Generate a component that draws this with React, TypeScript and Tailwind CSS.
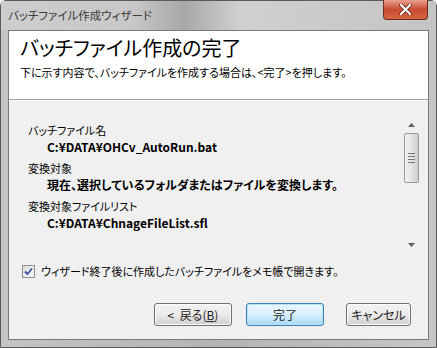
const jp = {
  fontFamily: '"Noto Sans CJK JP", "Liberation Sans", sans-serif',
  fontFeatureSettings: '"palt"',
};

const Scrollbar = () => (
  <div className="flex w-[17px] flex-col items-center bg-[#f0f0f0]">
    <div className="flex h-[17px] w-full items-center justify-center">
      <svg width="7" height="4" viewBox="0 0 7 4">
        <path d="M0 4 L3.5 0 L7 4 Z" fill="#606060" />
      </svg>
    </div>
    <div className="flex h-[50px] w-[15px] flex-col items-center justify-center gap-[2px] rounded-[2px] border border-[#9a9a9a] bg-gradient-to-r from-[#f2f2f2] via-[#e4e4e4] to-[#cfcfcf]">
      <div className="h-px w-[7px] bg-[#777]" />
      <div className="h-px w-[7px] bg-[#777]" />
      <div className="h-px w-[7px] bg-[#777]" />
      <div className="h-px w-[7px] bg-[#777]" />
    </div>
    <div className="flex-1" />
    <div className="flex h-[17px] w-full items-center justify-center">
      <svg width="7" height="4" viewBox="0 0 7 4">
        <path d="M0 0 L3.5 4 L7 0 Z" fill="#606060" />
      </svg>
    </div>
  </div>
);

const Btn = ({ label, primary }: { label: React.ReactNode; primary?: boolean }) => (
  <button
    className={`flex h-[23px] w-full items-center justify-center rounded-[3px] border text-[12px] text-[#222] ${
      primary
        ? "border-[#3c7fb1] bg-gradient-to-b from-[#eaf6fd] via-[#d9f0fc] to-[#a7d9f5] shadow-[inset_0_0_0_1px_#b8e4fb]"
        : "border-[#707070] bg-gradient-to-b from-[#f2f2f2] via-[#ebebeb] to-[#cfcfcf] shadow-[inset_0_0_0_1px_#fcfcfc]"
    }`}
  >
    {label}
  </button>
);

export default function App() {
  return (
    <div style={jp} className="h-[348px] w-[437px] overflow-hidden bg-white">
      <div className="flex h-full w-full flex-col rounded-t-[6px] border border-[#5a5a5a] bg-gradient-to-r from-[#c4c4c4] via-[#b4b4b4] to-[#c6c6c6]">
        {/* title bar */}
        <div className="relative flex h-[29px] shrink-0 items-center bg-[linear-gradient(90deg,#cdcdcd_0%,#c8c8c8_30%,#a8a8a8_42%,#d0d0d0_55%,#c4c4c4_100%)] pl-[7px]">
          <span className="text-[11.5px] text-[#3a3a3a]">バッチファイル作成ウィザード</span>
          <div className="absolute right-[8px] top-[-1px] flex h-[20px] w-[45px] items-center justify-center rounded-b-[4px] border border-t-0 border-[#6b2b20] bg-gradient-to-b from-[#e8a090] via-[#c84a32] to-[#d5643e]">
            <svg width="13" height="11" viewBox="0 0 13 11">
              <path d="M2 1 L11 10 M11 1 L2 10" stroke="#5a1e14" strokeWidth="3.6" strokeLinecap="round" />
              <path d="M2 1 L11 10 M11 1 L2 10" stroke="#ffffff" strokeWidth="2.2" strokeLinecap="round" />
            </svg>
          </div>
        </div>

        {/* client */}
        <div className="mx-[7px] mb-[7px] flex flex-1 flex-col border border-[#7a7a7a] bg-[#f0f0f0]">
          {/* header */}
          <div className="h-[69px] shrink-0 border-b border-[#a0a0a0] bg-white pl-[11px] pt-[1px]">
            <div className="text-[20px] leading-[32px] text-black">バッチファイル作成の完了</div>
            <div className="text-[11px] leading-[16px] text-black">
              下に示す内容で、バッチファイルを作成する場合は、&lt;完了&gt;を押します。
            </div>
          </div>
          <div className="h-px bg-white" />

          {/* list */}
          <div className="ml-[19px] mr-[8px] mt-[15px] flex h-[137px]">
            <div className="flex-1 pt-[6px] text-[11px] leading-[16px] text-black">
              <div>バッチファイル名</div>
              <div className="pl-[19px] text-[12px] font-bold leading-[17px]">C:¥DATA¥OHCv_AutoRun.bat</div>
              <div className="mt-[5px]">変換対象</div>
              <div className="pl-[19px] text-[12px] font-bold leading-[17px]">現在、選択しているフォルダまたはファイルを変換します。</div>
              <div className="mt-[5px]">変換対象ファイルリスト</div>
              <div className="pl-[19px] text-[12px] font-bold leading-[17px]">C:¥DATA¥ChnageFileList.sfl</div>
            </div>
            <Scrollbar />
          </div>

          {/* checkbox */}
          <div className="ml-[13px] mt-[10px] flex items-center gap-[6px]">
            <div className="flex h-[13px] w-[13px] items-center justify-center border border-[#8e8f8f] bg-gradient-to-br from-[#dcdcdc] to-[#fafafa]">
              <svg width="9" height="9" viewBox="0 0 9 9">
                <path d="M1 4.5 L3.5 7 L8 1.5" stroke="#3a4ea0" strokeWidth="1.8" fill="none" />
              </svg>
            </div>
            <span className="text-[11px] text-black">ウィザード終了後に作成したバッチファイルをメモ帳で開きます。</span>
          </div>

          {/* buttons */}
          <div className="mt-auto mb-[13px] flex justify-end pr-[17px]">
            <div className="w-[78px]">
              <Btn
                label={
                  <span>
                    &lt;&nbsp;&nbsp;戻る(<span className="underline">B</span>)
                  </span>
                }
              />
            </div>
            <div className="ml-[14px] w-[78px]">
              <Btn label="完了" primary />
            </div>
            <div className="ml-[22px] w-[65px]">
              <Btn label="キャンセル" />
            </div>
          </div>
        </div>
      </div>
    </div>
  );
}
